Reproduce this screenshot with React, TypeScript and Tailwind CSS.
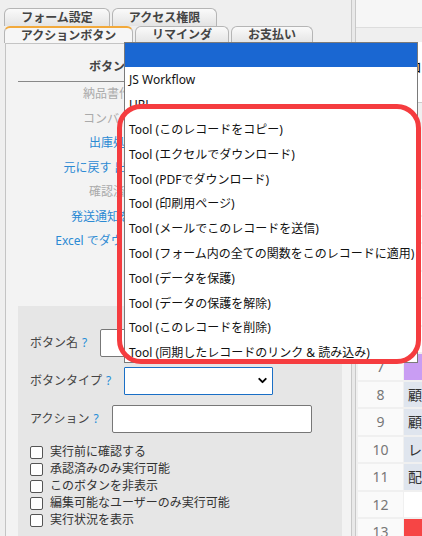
import React from 'react';
import { ChevronDown } from 'lucide-react';

const font = { fontFamily: '"Noto Sans", "Noto Sans CJK JP", sans-serif' };

const buttonItems = [
  { label: '納品書作成', cls: 'text-[#aaaaaa]' },
  { label: 'コンバート', cls: 'text-[#aaaaaa]' },
  { label: '出庫処理', cls: 'text-[#2b8ad3]' },
  { label: '元に戻す 出庫処理', cls: 'text-[#2b8ad3]' },
  { label: '確認済み', cls: 'text-[#aaaaaa]' },
  { label: '発送通知を送信', cls: 'text-[#2b8ad3]' },
  { label: 'Excel でダウンロード', cls: 'text-[#2b8ad3]' },
];

const options = [
  'JS Workflow',
  'URL',
  'Tool (このレコードをコピー)',
  'Tool (エクセルでダウンロード)',
  'Tool (PDFでダウンロード)',
  'Tool (印刷用ページ)',
  'Tool (メールでこのレコードを送信)',
  'Tool (フォーム内の全ての関数をこのレコードに適用)',
  'Tool (データを保護)',
  'Tool (データの保護を解除)',
  'Tool (このレコードを削除)',
  'Tool (同期したレコードのリンク & 読み込み)',
];

const checks = ['実行前に確認する', '承認済みのみ実行可能', 'このボタンを非表示', '編集可能なユーザーのみ実行可能', '実行状況を表示'];

const rows = [
  { n: 1, bg: 'bg-white', t: '' },
  { n: 2, bg: 'bg-white', t: '' },
  { n: 3, bg: 'bg-white', t: '' },
  { n: 4, bg: 'bg-white', t: '' },
  { n: 5, bg: 'bg-white', t: '' },
  { n: 6, bg: 'bg-white', t: '' },
  { n: 7, bg: 'bg-[#c99df3]', t: '' },
  { n: 8, bg: 'bg-[#dfe5ee]', t: '顧' },
  { n: 9, bg: 'bg-[#dfe5ee]', t: '顧' },
  { n: 10, bg: 'bg-[#dfe5ee]', t: 'レ' },
  { n: 11, bg: 'bg-[#dfe5ee]', t: '配' },
  { n: 12, bg: 'bg-white', t: '' },
  { n: 13, bg: 'bg-[#f64545]', t: '' },
];

function Tab({ label, w, active }: { label: string; w: string; active?: boolean }) {
  return (
    <div
      className={`${w} h-full flex items-center justify-center rounded-t-[6px] border border-b-0 border-[#b5b5b5] text-[12px] font-bold text-[#444] leading-none ${
        active ? 'bg-[#f6f6f6] border-t-2 border-t-[#f2a93b]' : 'bg-gradient-to-b from-[#fafafa] to-[#e4e4e4]'
      }`}
    >
      {label}
    </div>
  );
}

function Help() {
  return <span className="text-[#1f8dd6] ml-[4px]">?</span>;
}

export default function App() {
  return (
    <div className="relative w-[422px] h-[536px] overflow-hidden bg-[#efefef] flex text-[12px]" style={font}>
      {/* Left : réglages */}
      <div className="w-[353px] flex flex-col">
        <div className="pt-[8px] pl-[4px]">
          <div className="flex gap-[2px] h-[18px]">
            <Tab label="フォーム設定" w="w-[106px]" />
            <Tab label="アクセス権限" w="w-[105px]" />
          </div>
          <div className="flex gap-[2px] h-[17px]">
            <Tab label="アクションボタン" w="w-[129px]" active />
            <Tab label="リマインダ" w="w-[94px]" />
            <Tab label="お支払い" w="w-[82px]" />
          </div>
        </div>

        <div className="flex-1 ml-[5px] border-l border-t border-[#c4c4c4] bg-[#f3f3f3] pt-[14px]">
          <div className="w-[190px] ml-[12px]">
            <div className="text-center font-bold text-[#444] leading-[18px] pb-[5px] border-b border-[#888]">ボタン名</div>
            {buttonItems.map((b) => (
              <div key={b.label} className={`h-[24.5px] flex items-center justify-center whitespace-nowrap ${b.cls}`}>
                {b.label}
              </div>
            ))}
          </div>

          <div className="ml-[12px] mt-[52px] w-[324px] h-[300px] bg-[#e6e6e6] pl-[12px] pt-[23px] text-[#444]">
            <div className="flex items-center gap-[13px] h-[28px]">
              <span>
                ボタン名
                <Help />
              </span>
              <div className="w-[200px] h-[28px] bg-white border border-[#777] rounded-[2px]" />
            </div>
            <div className="flex items-center gap-[13px] h-[28px] mt-[10px]">
              <span>
                ボタンタイプ
                <Help />
              </span>
              <div className="w-[149px] h-[28px] bg-white border border-[#1a6fc6] rounded-[1px] flex items-center justify-end pr-[3px]">
                <ChevronDown size={13} strokeWidth={3.5} className="text-black" />
              </div>
            </div>
            <div className="flex items-center gap-[13px] h-[28px] mt-[10px]">
              <span>
                アクション
                <Help />
              </span>
              <div className="w-[200px] h-[28px] bg-white border border-[#777] rounded-[2px]" />
            </div>
            <div className="mt-[11px] text-[#333]">
              {checks.map((c) => (
                <div key={c} className="flex items-center gap-[7px] h-[17px]">
                  <span className="w-[13px] h-[13px] bg-white border border-[#555] rounded-[2px]" />
                  <span>{c}</span>
                </div>
              ))}
            </div>
          </div>
        </div>
      </div>

      {/* Right : tableau */}
      <div className="flex-1 flex">
        <div className="w-[5px] border-l border-r border-[#c8c8c8] bg-[#e9e9e9]" />
        <div className="flex-1 flex flex-col min-h-0">
          <div className="h-[28px] shrink-0 bg-[#f6f6f6] border-b border-[#dddddd]" />
          <div className="h-[14px] shrink-0" />
          <div className="h-[61px] shrink-0 bg-white border-b border-[#cccccc] flex items-start justify-end pt-[14px] overflow-hidden text-[14px] text-black">
            コ
          </div>
          <div className="flex-1 bg-[#f0f0f0] pt-[86px] flex flex-col gap-[2px] pl-[2px]">
            {rows.map((r) => (
              <div key={r.n} className="flex gap-[1px] h-[25.5px] shrink-0">
                <div className="w-[45px] bg-[#fafafa] flex items-center justify-center text-[14px] text-[#777]">{r.n}</div>
                <div className={`flex-1 ${r.bg} flex items-center pl-[4px] text-[14px] text-[#333] overflow-hidden`}>{r.t}</div>
              </div>
            ))}
          </div>
        </div>
      </div>

      {/* Liste déroulante ouverte */}
      <div className="absolute left-[124px] top-[42px] w-[294px] h-[321px] bg-white border border-[#7a7a7a] flex flex-col">
        <div className="h-[24px] bg-[#1a67d2] shrink-0" />
        {options.map((o) => (
          <div key={o} className="h-[24.8px] shrink-0 flex items-center pl-[4px] pt-[2px] whitespace-nowrap text-[#111]">
            {o}
          </div>
        ))}
      </div>

      {/* Annotation */}
      <div className="absolute left-[117px] top-[104px] w-[304px] h-[260px] border-[5px] border-[#f53c3f] rounded-[24px]" />
    </div>
  );
}
